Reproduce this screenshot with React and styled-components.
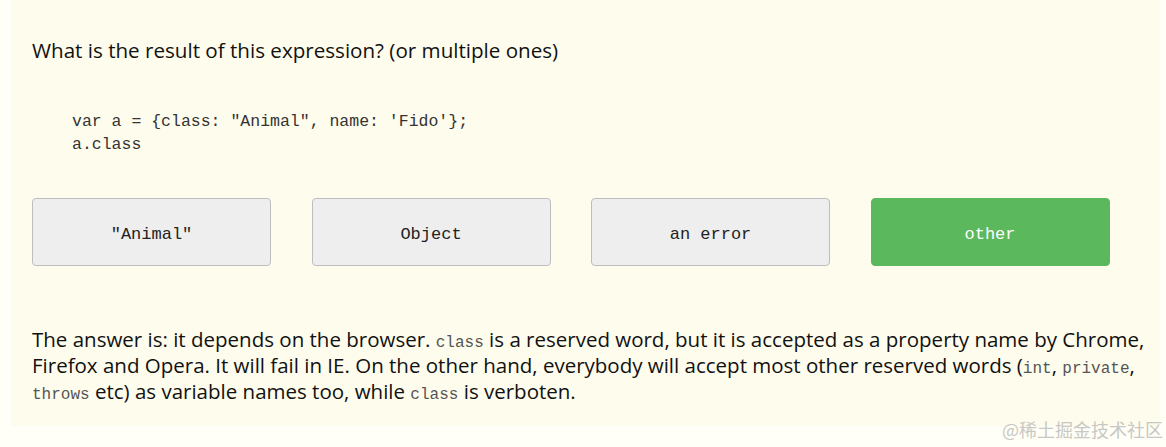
import React from 'react'
import styled, { createGlobalStyle } from 'styled-components'

const GlobalStyle = createGlobalStyle`
    html, body {
        margin: 0;
        padding: 0;
        background: #fffff7;
    }
`

const answers = [
    { label: '"Animal"' },
    { label: 'Object' },
    { label: 'an error' },
    { label: 'other', correct: true },
]

const App = () => {
    return (
        <Page>
            <GlobalStyle />
            <QuizCard>
                <Question>What is the result of this expression? (or multiple ones)</Question>
                <CodeBlock>
                    {`var a = {class: "Animal", name: 'Fido'};\na.class`}
                </CodeBlock>
                <Answers>
                    {answers.map(a => (
                        <AnswerButton key={a.label} correct={a.correct ? 1 : 0}>{a.label}</AnswerButton>
                    ))}
                </Answers>
                <Explanation>
                    The answer is: it depends on the browser. <Code>class</Code> is a reserved word, but it is accepted as a property name by Chrome,<br />
                    Firefox and Opera. It will fail in IE. On the other hand, everybody will accept most other reserved words (<Code>int</Code>, <Code>private</Code>,<br />
                    <Code>throws</Code> etc) as variable names too, while <Code>class</Code> is verboten.
                </Explanation>
                <Watermark>@稀土掘金技术社区</Watermark>
            </QuizCard>
        </Page>
    )
}

const Page = styled.div`
    width: 1166px;
    height: 447px;
    overflow: hidden;
    padding-left: 11px;
    box-sizing: border-box;
`

const QuizCard = styled.div`
    position: relative;
    width: 1149px;
    height: 426px;
    box-sizing: border-box;
    background: #fefcec;
    padding: 36px 0 0 21px;
    color: #111;
`

const Question = styled.h3`
    margin: 0;
    font-family: "Open Sans", "Noto Sans", sans-serif;
    font-weight: 400;
    font-size: 20.6px;
    line-height: 28px;
`

const CodeBlock = styled.pre`
    margin: 46px 0 0 40px;
    font-family: "Liberation Mono", monospace;
    font-size: 16.5px;
    line-height: 23px;
    color: #333;
    white-space: pre;
`

const Answers = styled.div`
    display: grid;
    grid-template-columns: repeat(4, 239px);
    column-gap: 40.5px;
    margin-top: 42px;
`

const AnswerButton = styled.div`
    height: 68px;
    box-sizing: border-box;
    display: flex;
    align-items: center;
    justify-content: center;
    padding-top: 5px;
    border-radius: 4px;
    border: 1px solid ${p => (p.correct ? '#5cb85c' : '#bdbdbd')};
    background: ${p => (p.correct ? '#5cb85c' : '#eeeeee')};
    color: ${p => (p.correct ? '#fff' : '#222')};
    font-family: "Liberation Mono", monospace;
    font-size: 17px;
`

const Explanation = styled.p`
    margin: 60px 0 0;
    font-family: "Open Sans", "Noto Sans", sans-serif;
    font-size: 20.5px;
    line-height: 26px;
    white-space: nowrap;
`

const Code = styled.code`
    font-family: "Liberation Mono", monospace;
    font-size: 16px;
    line-height: 1;
    color: #555;
`

const Watermark = styled.div`
    position: absolute;
    right: -3px;
    bottom: -16px;
    font-family: "Noto Sans CJK SC", sans-serif;
    font-size: 18px;
    color: #c8c8c4;
`

export default App
